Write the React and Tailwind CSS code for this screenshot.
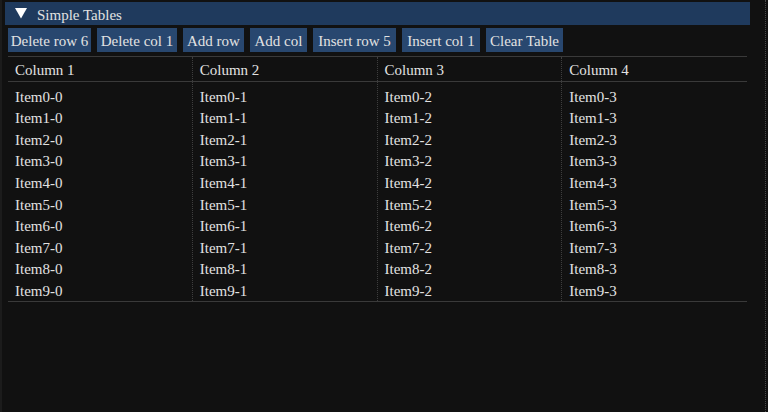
const buttons = [
  { label: "Delete row 6", w: "w-[83px]" },
  { label: "Delete col 1", w: "w-[80px]" },
  { label: "Add row", w: "w-[61px]" },
  { label: "Add col", w: "w-[57px]" },
  { label: "Insert row 5", w: "w-[83px]" },
  { label: "Insert col 1", w: "w-[78px]" },
  { label: "Clear Table", w: "w-[77px]" },
];

const columns = ["Column 1", "Column 2", "Column 3", "Column 4"];
const rows = Array.from({ length: 10 }, (_, r) => columns.map((_, c) => `Item${r}-${c}`));

export default function App() {
  return (
    <div
      className="relative h-[412px] w-[768px] overflow-hidden bg-[#111111] text-[15px] text-[#e2e2e2]"
      style={{ fontFamily: '"Liberation Serif", "DejaVu Serif", serif' }}
    >
      <div className="absolute inset-y-0 left-0 w-[2px] bg-[#1c1c1c]" />
      <div className="absolute inset-y-0 right-[2px] w-px border-r border-dotted border-[#4a4a4a]" />

      <div className="ml-[5px] mt-[2px] flex h-[23px] w-[745px] items-center bg-[#1f3a5d]">
        <svg className="ml-[10px]" width="12" height="11" viewBox="0 0 12 11">
          <path d="M0 0H12L6 10.5Z" fill="#ffffff" />
        </svg>
        <span className="ml-[10px] pt-[3px] leading-none">Simple Tables</span>
      </div>

      <div className="ml-[8px] mt-[3px] flex gap-[6px]">
        {buttons.map((b) => (
          <div
            key={b.label}
            className={`flex h-[24px] items-center justify-center bg-[#28476f] pt-[2px] ${b.w}`}
          >
            {b.label}
          </div>
        ))}
      </div>

      <div className="ml-[8px] mt-[4px] w-[739px] border-y border-[#3a3a3a]">
        <div className="grid grid-cols-4 border-b border-[#3a3a3a]">
          {columns.map((c, i) => (
            <div
              key={c}
              className={`flex h-[24px] items-center pl-[7px] pt-[3px] ${i < 3 ? "border-r border-dotted border-[#3e3e3e]" : ""}`}
            >
              {c}
            </div>
          ))}
        </div>
        <div className="grid grid-cols-4">
          {columns.map((c, i) => (
            <div
              key={c}
              className={`flex flex-col pt-[3px] ${i < 3 ? "border-r border-dotted border-[#3e3e3e]" : ""}`}
            >
              {rows.map((r) => (
                <div key={r[i]} className="flex h-[21.6px] items-center pl-[7px] pt-[2px]">
                  {r[i]}
                </div>
              ))}
            </div>
          ))}
        </div>
      </div>
    </div>
  );
}
